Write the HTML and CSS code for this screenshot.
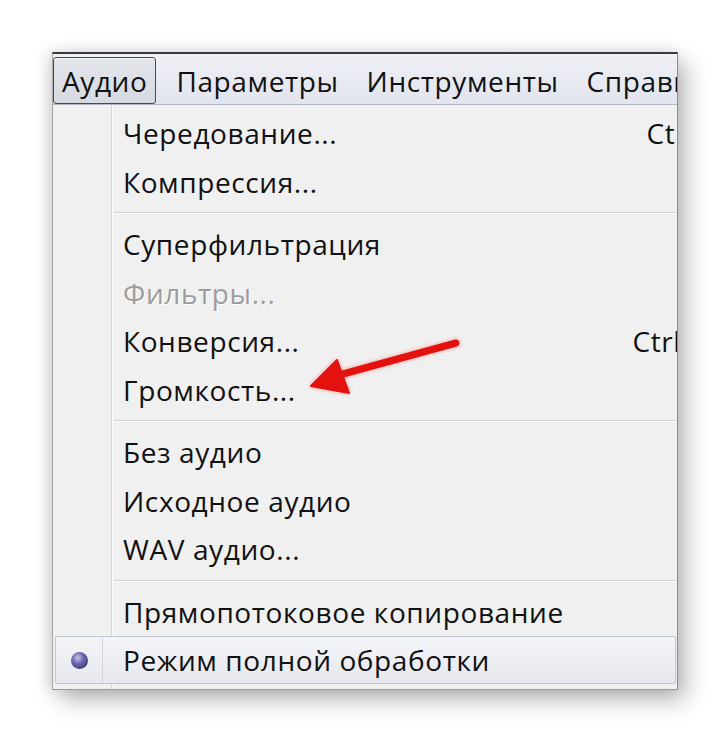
FILE: index.html
```html
<!DOCTYPE html>
<html lang="ru">
<head>
<meta charset="utf-8">
<title>Аудио меню</title>
<link rel="stylesheet" href="styles.css">
</head>
<body>
<div class="page">
  <div class="menu">
    <div class="menubar">
      <span class="mb-item active">Аудио</span>
      <span class="mb-item">Параметры</span>
      <span class="mb-item">Инструменты</span>
      <span class="mb-item">Справка</span>
    </div>
    <div class="dropdown">
      <div class="item"><span class="label">Чередование...</span><span class="shortcut sc-a">Ctrl+I</span></div>
      <div class="item"><span class="label">Компрессия...</span></div>
      <div class="sep"></div>
      <div class="item"><span class="label">Суперфильтрация</span></div>
      <div class="item disabled"><span class="label">Фильтры...</span></div>
      <div class="item"><span class="label">Конверсия...</span><span class="shortcut sc-b">Ctrl+P</span></div>
      <div class="item"><span class="label">Громкость...</span></div>
      <div class="sep"></div>
      <div class="item"><span class="label">Без аудио</span></div>
      <div class="item"><span class="label">Исходное аудио</span></div>
      <div class="item"><span class="label">WAV аудио...</span></div>
      <div class="sep"></div>
      <div class="item"><span class="label">Прямопотоковое копирование</span></div>
      <div class="item checked"><span class="check"><span class="dot"></span></span><span class="label">Режим полной обработки</span></div>
    </div>
  </div>
  <svg class="arrow" width="728" height="742" viewBox="0 0 728 742">
    <line x1="456" y1="343" x2="332" y2="377" stroke="#e3120f" stroke-width="7" stroke-linecap="round"/>
    <polygon points="311,386 337,360 349,393" fill="#e3120f" stroke="#e3120f" stroke-width="2" stroke-linejoin="round"/>
  </svg>
</div>
</body>
</html>
```
FILE: styles.css
```css
html, body {
  margin: 0;
  padding: 0;
  background: #ffffff;
}
.page {
  position: relative;
  width: 728px;
  height: 742px;
  padding: 52px 0 0 52px;
  box-sizing: border-box;
  font-family: "Open Sans", "Noto Sans", sans-serif;
  font-size: 28px;
  letter-spacing: 0.6px;
  color: #111;
}
.menu {
  width: 626px;
  height: 638px;
  background: #f0f0f0;
  border-top: 2px solid #3a3a3a;
  border-left: 1px solid #a8a8a8;
  border-right: 1px solid #8c8c8c;
  border-bottom: 1px solid #9a9a9a;
  box-sizing: border-box;
  box-shadow: 8px 10px 22px rgba(0, 0, 0, 0.28), -4px 0 14px rgba(0, 0, 0, 0.12);
  overflow: hidden;
  display: flex;
  flex-direction: column;
}
.menubar {
  height: 47px;
  display: flex;
  align-items: stretch;
  gap: 12px;
  padding-top: 3px;
  background: linear-gradient(#f0f1f6, #e1e4ee);
  border-bottom: 1px solid #b4b8c4;
  white-space: nowrap;
  flex-shrink: 0;
}
.mb-item {
  display: flex;
  align-items: center;
  padding: 0 8px 0 8px;
  line-height: 1;
}
.mb-item.active {
  border: 1px solid #4a4a4a;
  border-radius: 3px;
  background: linear-gradient(#e4e6ec, #d6d9e0);
  box-shadow: inset 0 1px 0 #f4f5f8;
}
.dropdown {
  flex: 1;
  display: flex;
  flex-direction: column;
  padding-top: 4px;
  background: linear-gradient(to right, transparent 58px, #d6d6d6 58px, #d6d6d6 59px, #fbfbfb 59px, #fbfbfb 60px, transparent 60px);
}
.item {
  height: 48.5px;
  display: flex;
  align-items: center;
  padding-left: 70px;
  white-space: nowrap;
  flex-shrink: 0;
}
.label {
  line-height: 1;
}
.shortcut {
  line-height: 1;
}
.sc-a { margin-left: auto; margin-right: -43px; }
.sc-b { margin-left: auto; margin-right: -38px; }
.disabled .label {
  color: #9c9c9c;
  text-shadow: 1px 1px 0 #ffffff;
}
.sep {
  height: 1px;
  background: #d2d2d2;
  border-bottom: 1px solid #ffffff;
  margin: 6px 0 6px 61px;
  flex-shrink: 0;
}
.item.checked {
  margin: 0 1px 0 2px;
  height: 48px;
  padding-left: 0;
  border: 1px solid #c2c6ce;
  border-radius: 2px;
  background: linear-gradient(#f4f5f8, #e6e8ed);
  box-sizing: border-box;
}
.check {
  width: 46px;
  align-self: stretch;
  display: flex;
  align-items: center;
  justify-content: center;
  border-right: 1px solid #d0d4da;
  margin-right: 20px;
}
.dot {
  width: 17px;
  height: 17px;
  border-radius: 50%;
  background: radial-gradient(circle at 40% 35%, #c8c8ee 0, #7270b4 35%, #3c3a78 75%, #2c2a60 100%);
}
.arrow {
  position: absolute;
  left: 0;
  top: 0;
  pointer-events: none;
  filter: drop-shadow(0 0 2px rgba(255, 80, 80, 0.55));
}
```
